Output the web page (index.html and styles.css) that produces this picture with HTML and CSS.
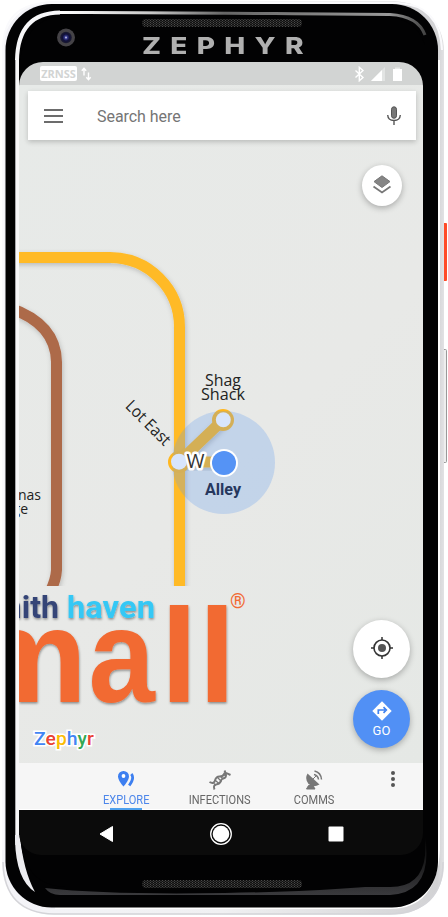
FILE: index.html
```html
<!DOCTYPE html>
<html lang="en">
<head>
<meta charset="utf-8">
<title>Zephyr Maps</title>
<link rel="stylesheet" href="styles.css">
</head>
<body>
<div class="phone">
  <svg class="shell" width="448" height="917" viewBox="0 0 448 917" aria-hidden="true">
    <defs>
      <linearGradient id="rim" x1="0" x2="1" y1="0" y2="0"><stop offset="0" stop-color="#f4f4f8"/><stop offset=".5" stop-color="#f0f0f2"/><stop offset=".985" stop-color="#d2d2d4"/><stop offset="1" stop-color="#e2e2e4"/></linearGradient>
      <linearGradient id="glint" x1="0" x2="1" y1="0" y2="0"><stop offset="0" stop-color="#fff"/><stop offset=".25" stop-color="#c8c8c8"/><stop offset=".45" stop-color="#666"/><stop offset=".9" stop-color="#999"/><stop offset="1" stop-color="#444"/></linearGradient>
      <linearGradient id="low" x1="0" x2="0" y1="0" y2="1"><stop offset="0" stop-color="#000"/><stop offset="1" stop-color="#3a3a3d"/></linearGradient>
      <pattern id="mesh" width="3" height="2" patternUnits="userSpaceOnUse"><rect width="3" height="2" fill="#111"/><rect width="1" height="1" fill="#4a4a4a"/><rect x="1.500" y="1" width="1" height="1" fill="#444"/></pattern>
      <radialGradient id="lens"><stop offset="0" stop-color="#eef"/><stop offset=".25" stop-color="#34388c"/><stop offset=".6" stop-color="#101038"/><stop offset="1" stop-color="#1c1c30"/></radialGradient>
    </defs>
    <rect x="442" y="223" width="5" height="58" rx="1" fill="#ff4b28"/>
    <rect x="442.500" y="349.500" width="4" height="113" rx="1" fill="#eee" stroke="#999"/>
    <rect x="2" y="1.500" width="442" height="913" rx="49" fill="url(#rim)"/>
    <path d="M3 850V50Q3 3 50 3H398Q440 5 442 50" fill="none" stroke="#fafafc" stroke-width="2"/>
    <path d="M3 862Q4 913 54 914H390Q443 912 443 862" fill="none" stroke="#d4d4d8" stroke-width="1.500"/>
    <path d="M439 60V850Q436 908 390 908H55" fill="none" stroke="#fff" stroke-width="2"/>
    <rect x="5.500" y="4" width="432.500" height="903.500" rx="46" fill="#020203"/>
    <path d="M17 845V60Q18 13 60 12.500" fill="none" stroke="#f7f7f9" stroke-width="4"/>
    <path d="M60 12.500C160 12 290 14 390 14.500Q418 16 425 35" fill="none" stroke="url(#glint)" stroke-width="3"/>
    <path d="M15.500 845V60" fill="none" stroke="#a9a9ac"/>
    <path d="M15 840Q16 880 35 892Q23 870 20 835H15Z" fill="#ececf0"/>
    <path d="M45 888Q110 895 225 893T407 883Q423 870 425 835Q434 893 390 895H60Q50 895 45 888Z" fill="url(#low)"/>
    <path d="M20 76V60Q26 21 60 16H380Q416 17 425 45V855Q422 887 390 887H65Q23 885 20 835Z" fill="#020203"/>
    <rect x="142" y="19" width="160" height="8" rx="4" fill="url(#mesh)"/>
    <rect x="142" y="880" width="160" height="8" rx="4" fill="url(#mesh)"/>
    <circle cx="66" cy="37.500" r="9" fill="#454347"/><circle cx="66" cy="37.500" r="5.800" fill="url(#lens)"/>
  </svg>

  <header class="brand"><span>ZEPHYR</span></header>

  <main class="screen">
    <div class="status">
      <span class="carrier">ZRNSS</span>
      <svg width="11" height="14" viewBox="0 0 11 14" fill="none" stroke="#fff" stroke-width="1.400"><path d="M3 8.500V1.500M.8 3.800 3 1.300 5.200 3.800M7.500 5.500V12.500M5.300 10.200 7.500 12.700 9.700 10.200"/></svg>
      <svg class="signals" width="50" height="16" viewBox="0 0 50 16"><path d="M1.500 4.500 9 11.500 5.300 14.800V1.300L9 4.500 1.500 11.500" fill="none" stroke="#fff" stroke-width="1.400"/><path d="M17 15 31 1V15Z" fill="#e2e4e3"/><path d="M17 15 28 4V15Z" fill="#fff"/><path d="M39 3H48V15H39Z" fill="#fff"/><path d="M41 1.500H46V3H41Z" fill="#e8eae9"/></svg>
    </div>

    <section class="map">
      <svg class="canvas" width="404" height="677" viewBox="19 85 404 677">
        <defs>
          <filter id="soft" x="-20%" y="-20%" width="140%" height="140%"><feDropShadow dx="1" dy="2" stdDeviation="2.500" flood-opacity=".2"/></filter>
          <filter id="tight" x="-10%" y="-10%" width="120%" height="130%"><feDropShadow dx=".5" dy="1.500" stdDeviation="1" flood-opacity=".4"/></filter>
          <clipPath id="tracks"><rect x="19" y="85" width="404" height="501"/></clipPath>
        </defs>
        <g clip-path="url(#tracks)">
          <g fill="none" stroke-width="11" filter="url(#soft)">
            <path d="M0 257.500H110A69.500 69.500 0 0 1 179.500 327V600" stroke="#ffba27"/>
            <path d="M10 308Q56 324 56.500 362V570Q56 580 50 592" stroke="#ad6a4a"/>
          </g>
        </g>
        <g stroke="#ffb71f" stroke-width="11" filter="url(#soft)"><path d="M179 462 223 420M179 462H224"/></g>
        <circle cx="223" cy="420" r="11" fill="#ffb71f"/><circle cx="179" cy="462" r="11" fill="#ffb71f"/>
        <circle cx="223.500" cy="462.500" r="51.500" fill="#5f9af0" fill-opacity=".27"/>
        <circle cx="223.300" cy="419.700" r="7.500" fill="#d8e5fc"/><circle cx="179" cy="461.700" r="8" fill="#d8e5fc"/>
        <circle cx="224" cy="463" r="14" fill="#fff"/><circle cx="224" cy="463" r="12" fill="#5593f5"/>
        <text class="walk" x="186.500" y="468" textLength="18" lengthAdjust="spacingAndGlyphs">W</text>
        <text class="stop" x="205" y="385.500" textLength="36" lengthAdjust="spacingAndGlyphs">Shag</text>
        <text class="stop" x="201" y="400" textLength="44" lengthAdjust="spacingAndGlyphs">Shack</text>
        <text class="stop" transform="translate(124.500 407) rotate(45)" textLength="56" lengthAdjust="spacingAndGlyphs">Lot East</text>
        <text class="here" x="205" y="494.500" textLength="36" lengthAdjust="spacingAndGlyphs">Alley</text>
        <text class="place" x="41" y="500" text-anchor="end">nas</text>
        <text class="place" x="28" y="514" text-anchor="end">ge</text>
        <g filter="url(#tight)">
          <text class="smith" x="59" y="618" text-anchor="end" textLength="65" lengthAdjust="spacingAndGlyphs">mith</text>
          <text class="haven" x="67" y="618" textLength="88" lengthAdjust="spacingAndGlyphs">haven</text>
          <text class="mall" x="-32" y="702">m</text>
          <text class="mall" transform="translate(88.500 702) scale(.89 1)">a</text>
          <text class="mall" x="160.500 198.500" y="702">ll</text>
        </g>
        <text class="reg" x="230" y="607.500">®</text>
        <text class="zephyr" x="34" y="745" textLength="60" lengthAdjust="spacingAndGlyphs"><tspan fill="#4285f4">Z</tspan><tspan fill="#ea4335">e</tspan><tspan fill="#fbbc05">p</tspan><tspan fill="#4285f4">h</tspan><tspan fill="#34a853">y</tspan><tspan fill="#ea4335">r</tspan></text>
      </svg>

      <div class="overlay">
        <div class="search">
          <svg width="19" height="14" viewBox="0 0 19 14" fill="#6c6c6c"><path d="M0 0H19V2H0ZM0 6H19V8H0ZM0 12H19V14H0Z"/></svg>
          <span class="hint">Search here</span>
          <svg width="14" height="20" viewBox="0 0 14 20"><rect x="4.500" y=".8" width="5" height="11.500" rx="2.500" fill="#777" stroke="#555"/><path d="M.7 9Q1 14.500 7 14.500T13.300 9M7 14.500V19" fill="none" stroke="#555" stroke-width="1.400"/></svg>
        </div>
        <div class="round layers">
          <svg width="20" height="20" viewBox="0 0 20 20"><path d="M10 .8 18 6.600 10 12.500 2 6.600Z" fill="#858585" stroke="#777"/><path d="M1.500 11.500 10 17.500 18.500 11.500" fill="none" stroke="#777" stroke-width="1.800"/></svg>
        </div>
        <div class="actions">
          <div class="round locate">
            <svg width="22" height="22" viewBox="0 0 22 22"><circle cx="11" cy="11" r="8" fill="none" stroke="#333" stroke-width="1.600"/><circle cx="11" cy="11" r="4" fill="#555"/><path d="M11 0V3M11 19V22M0 11H3M19 11H22" stroke="#333" stroke-width="1.500"/></svg>
          </div>
          <div class="round go">
            <svg width="20" height="20" viewBox="0 0 20 20"><path d="M10 .3 19.700 10 10 19.700.3 10Z" fill="#fff"/><path d="M6.300 13V9H13M11.500 6.200 14.300 9 11.500 11.800" fill="none" stroke="#3f82f0" stroke-width="1.700"/></svg>
            <span>GO</span>
          </div>
        </div>
      </div>
    </section>

    <nav class="tabs">
      <div class="tab active">
        <svg width="18" height="18" viewBox="0 0 18 18"><path d="M6.500 1A5.400 5.400 0 0 0 1 6.500C1 10.500 6.500 16.500 6.500 16.500S12 10.500 12 6.500A5.400 5.400 0 0 0 6.500 1Z" fill="#3d7ff0"/><circle cx="6.500" cy="6" r="1.900" fill="#fff"/><path d="M14.300 4Q17.800 8 12.200 15.500" fill="none" stroke="#3d7ff0" stroke-width="2.800"/></svg>
        <span>EXPLORE</span>
      </div>
      <div class="tab">
        <svg class="dna" width="22" height="20" viewBox="0 0 22 20" fill="none" stroke="#777" stroke-width="2"><path d="M.5 12C4 14 5.500 12.500 6 10.500S7.500 6.500 10.500 6.500 14.500 6 15 4 17.500 3 21.500 5M5.500 19.500C4 16 5.500 14.500 8 14.200S11.500 12.500 12 10.500 14 8.500 15.500 8 18 5 15.500.5"/><path d="M5 13.500 7 15.500M6.500 10.500 10.500 14M8.500 7.500 12.500 11.500M11.500 6.500 14.500 9M15 4.500 17 6.500" stroke-width="1.200"/></svg>
        <span>INFECTIONS</span>
      </div>
      <div class="tab">
        <svg width="18" height="20" viewBox="0 0 18 20"><path d="M2.500 3.500 14.500 14.500Q8 18 3.500 14-.5 9 2.500 3.500Z" fill="#777"/><path d="M1.500 19 3.500 15.500H8L10 19ZM8 9 11 6" fill="#777" stroke="#777" stroke-width="1"/><path d="M9.500 1Q16 2.500 16.500 9.500M9 4.500Q13 5.500 13.500 9.500" fill="none" stroke="#777" stroke-width="1.500"/></svg>
        <span>COMMS</span>
      </div>
      <div class="more"><svg width="6" height="18" viewBox="0 0 6 18" fill="#555"><circle cx="3" cy="3" r="2"/><circle cx="3" cy="9" r="2"/><circle cx="3" cy="15" r="2"/></svg></div>
    </nav>

    <div class="keys">
      <svg width="15" height="18" viewBox="0 0 15 18"><path d="M13.500 1.500V16.500L1 9Z" fill="#fff" stroke="#fff" stroke-linejoin="round"/></svg>
      <svg width="24" height="24" viewBox="0 0 24 24"><circle cx="12" cy="12" r="10.300" fill="none" stroke="#fff" stroke-width="1.300"/><circle cx="12" cy="12" r="8.300" fill="#fff"/></svg>
      <svg width="16" height="16" viewBox="0 0 16 16"><rect x=".5" y=".5" width="15" height="15" rx="1" fill="#fff"/></svg>
    </div>
  </main>
</div>
</body>
</html>
```

FILE: styles.css
```css
* { box-sizing: border-box; }
body { margin: 0; background: #fff; font-family: Roboto, "Liberation Sans", sans-serif; }
svg { display: block; flex: none; }
.phone { position: relative; width: 448px; height: 917px; overflow: hidden; }
.shell { position: absolute; inset: 0; }
.brand {
  position: relative; height: 62px; padding: 35px 0 0 142px;
  font: 800 23px/23px Inter, sans-serif; letter-spacing: 7.6px; color: #b0b0b0;
}
.brand span { display: inline-block; transform: scaleX(1.22); transform-origin: left; }
.screen {
  position: relative; width: 404px; height: 793px; margin-left: 19px;
  display: flex; flex-direction: column; overflow: hidden;
  border-radius: 24px 24px 22px 22px; background: #0b0b0b;
}
.status { flex: none; height: 23px; display: flex; align-items: center; padding: 0 19px 0 21px; gap: 4px; background: #d2d4d3; }
.carrier { width: 37px; height: 15px; border-radius: 2px; background: #fff; color: #d2d4d3; font: 700 11px/15px "Open Sans", sans-serif; text-align: center; }
.signals { margin-left: auto; }
.map { flex: none; height: 678px; display: grid; background: linear-gradient(135deg, #e7eae8, #e8e9e7 55%, #e5e8e5); }
.canvas, .overlay { grid-area: 1 / 1; }
.overlay { position: relative; display: flex; flex-direction: column; padding: 6px 7px 15px 9px; }
.search { height: 49px; padding: 0 15px 0 16px; display: flex; align-items: center; background: #fff; box-shadow: 0 2px 5px rgba(0,0,0,.2); }
.hint { flex: 1; margin-left: 34px; padding-top: 2px; color: #757575; font-size: 16px; letter-spacing: -.05px; }
.round { display: flex; flex-direction: column; align-items: center; justify-content: center; border-radius: 50%; background: #fff; box-shadow: 0 2px 6px rgba(0,0,0,.28); }
.layers { width: 40px; height: 41px; margin: 25px 14px 0 auto; padding-bottom: 2px; }
.actions { margin: auto 6px 0 auto; display: flex; flex-direction: column; gap: 12px; }
.locate { width: 57px; height: 58px; padding-bottom: 2px; }
.go { width: 57px; height: 58px; padding-top: 1px; background: #5190f5; color: #fff; font-size: 13px; font-weight: 400; line-height: 15px; gap: 2px; }
.stop { font: 400 16.5px "Open Sans", sans-serif; fill: #222; }
.place { font: 400 14px "Open Sans", sans-serif; fill: #222; }
.here { font: 700 16px Roboto, sans-serif; fill: #26375d; }
.walk { font: 400 20px "Open Sans", sans-serif; fill: #333; stroke: #fff; stroke-width: 5px; stroke-linejoin: round; paint-order: stroke; }
.smith, .haven { font: 700 32px Roboto, sans-serif; fill: #354577; }
.haven { fill: #35c8f5; }
.mall { font: 700 134px "Liberation Sans", sans-serif; fill: #f26a33; }
.reg { font: 400 20px Roboto, sans-serif; fill: #f26a33; }
.zephyr { font: 500 18px Roboto, sans-serif; stroke: #fff; stroke-width: 3px; paint-order: stroke; }
.tabs { flex: none; height: 47px; display: grid; grid-template-columns: 60px 94px 94px 94px 62px; background: #f6f6f6; border-bottom: 1px solid #fff; }
.tab { display: flex; flex-direction: column; align-items: center; justify-content: space-between; padding-top: 7px; font-size: 12px; line-height: 14px; color: #666; }
.tab:first-child { grid-column: 2; }
.tab span { padding-bottom: 2px; transform: scaleX(.92); }
.active { color: #4c86ea; }
.active::after { content: ""; position: absolute; margin-top: 38px; width: 32px; height: 2px; background: #4da0ee; }
.more { padding: 7px 0 0 29px; }
.keys { flex: 1; display: flex; align-items: center; padding: 2px 79px 0 80px; justify-content: space-between; }
```
